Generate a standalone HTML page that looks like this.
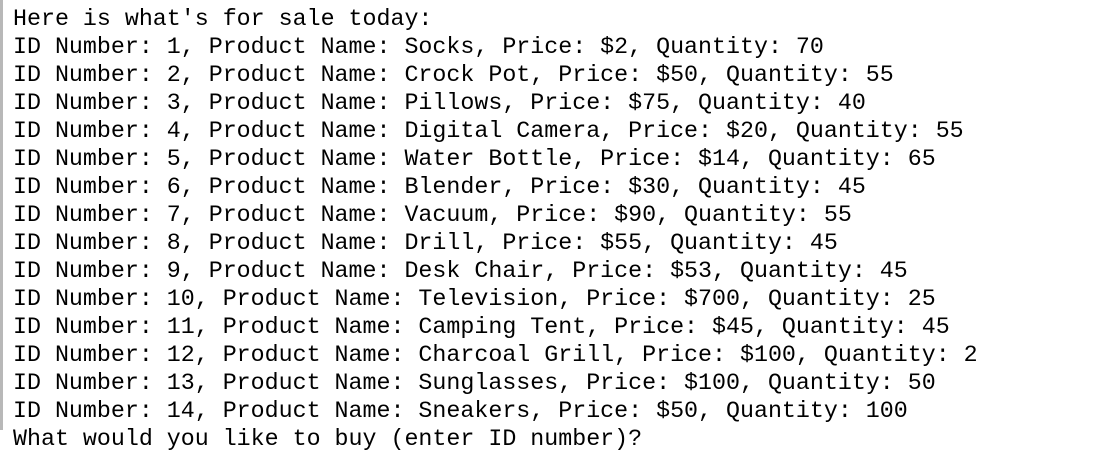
<!DOCTYPE html>
<html><head><style>
html,body{margin:0;padding:0;background:#fff;width:1106px;height:430px;overflow:hidden}
.b{position:absolute;left:0;top:0;width:3px;height:430px;background:#b8b8b8}
pre{position:absolute;left:13px;top:5px;margin:0;font-family:"Liberation Mono",monospace;font-size:23.3px;line-height:28px;color:#000;letter-spacing:0}
</style></head><body><div class="b"></div><pre>Here is what's for sale today:
ID Number: 1, Product Name: Socks, Price: $2, Quantity: 70
ID Number: 2, Product Name: Crock Pot, Price: $50, Quantity: 55
ID Number: 3, Product Name: Pillows, Price: $75, Quantity: 40
ID Number: 4, Product Name: Digital Camera, Price: $20, Quantity: 55
ID Number: 5, Product Name: Water Bottle, Price: $14, Quantity: 65
ID Number: 6, Product Name: Blender, Price: $30, Quantity: 45
ID Number: 7, Product Name: Vacuum, Price: $90, Quantity: 55
ID Number: 8, Product Name: Drill, Price: $55, Quantity: 45
ID Number: 9, Product Name: Desk Chair, Price: $53, Quantity: 45
ID Number: 10, Product Name: Television, Price: $700, Quantity: 25
ID Number: 11, Product Name: Camping Tent, Price: $45, Quantity: 45
ID Number: 12, Product Name: Charcoal Grill, Price: $100, Quantity: 2
ID Number: 13, Product Name: Sunglasses, Price: $100, Quantity: 50
ID Number: 14, Product Name: Sneakers, Price: $50, Quantity: 100
What would you like to buy (enter ID number)?</pre></body></html>
